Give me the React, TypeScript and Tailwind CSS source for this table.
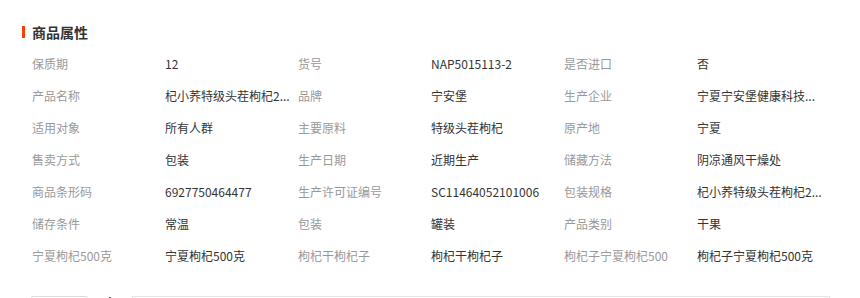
const rows: [string, string][][] = [
  [['保质期', '12'], ['货号', 'NAP5015113-2'], ['是否进口', '否']],
  [['产品名称', '杞小荞特级头茬枸杞2...'], ['品牌', '宁安堡'], ['生产企业', '宁夏宁安堡健康科技...']],
  [['适用对象', '所有人群'], ['主要原料', '特级头茬枸杞'], ['原产地', '宁夏']],
  [['售卖方式', '包装'], ['生产日期', '近期生产'], ['储藏方法', '阴凉通风干燥处']],
  [['商品条形码', '6927750464477'], ['生产许可证编号', 'SC11464052101006'], ['包装规格', '杞小荞特级头茬枸杞2...']],
  [['储存条件', '常温'], ['包装', '罐装'], ['产品类别', '干果']],
  [['宁夏枸杞500克', '宁夏枸杞500克'], ['枸杞干枸杞子', '枸杞干枸杞子'], ['枸杞子宁夏枸杞500', '枸杞子宁夏枸杞500克']],
]

export default function App() {
  return (
    <div
      className="h-[298px] w-[860px] overflow-hidden bg-white pl-[22px] pt-[21px] text-[12px] text-[#333]"
      style={{ fontFamily: '"Noto Sans CJK SC", "Liberation Sans", sans-serif' }}
    >
      {/* 标题 */}
      <div className="flex h-[22px] items-center gap-[7px]">
        <span className="h-[12px] w-[3px] bg-[#ff4000]" />
        <h2 className="text-[14px] font-bold leading-none text-[#333]">商品属性</h2>
      </div>

      {/* 属性表 */}
      <div className="mt-[5px] pl-[10px]">
        {rows.map((row, i) => (
          <div key={i} className="grid h-[32px] grid-cols-[133px_133px_133px_133px_133px_133px] items-center">
            {row.map(([label, value]) => (
              <div key={label} className="contents">
                <span className="whitespace-nowrap text-[#999]">{label}</span>
                <span className="whitespace-nowrap">{value}</span>
              </div>
            ))}
          </div>
        ))}
      </div>

      {/* 底部（被截断） */}
      <div className="mt-[24px] flex items-start pl-[9px]">
        <div className="h-[10px] w-[57px] rounded-t-[2px] border border-[#ddd]" />
        <div className="ml-[21px] mt-[1px] h-[2px] w-[2px] bg-[#555]" />
        <div className="ml-[21px] h-[10px] w-[698px] border border-[#e5e5e5]" />
      </div>
    </div>
  )
}
